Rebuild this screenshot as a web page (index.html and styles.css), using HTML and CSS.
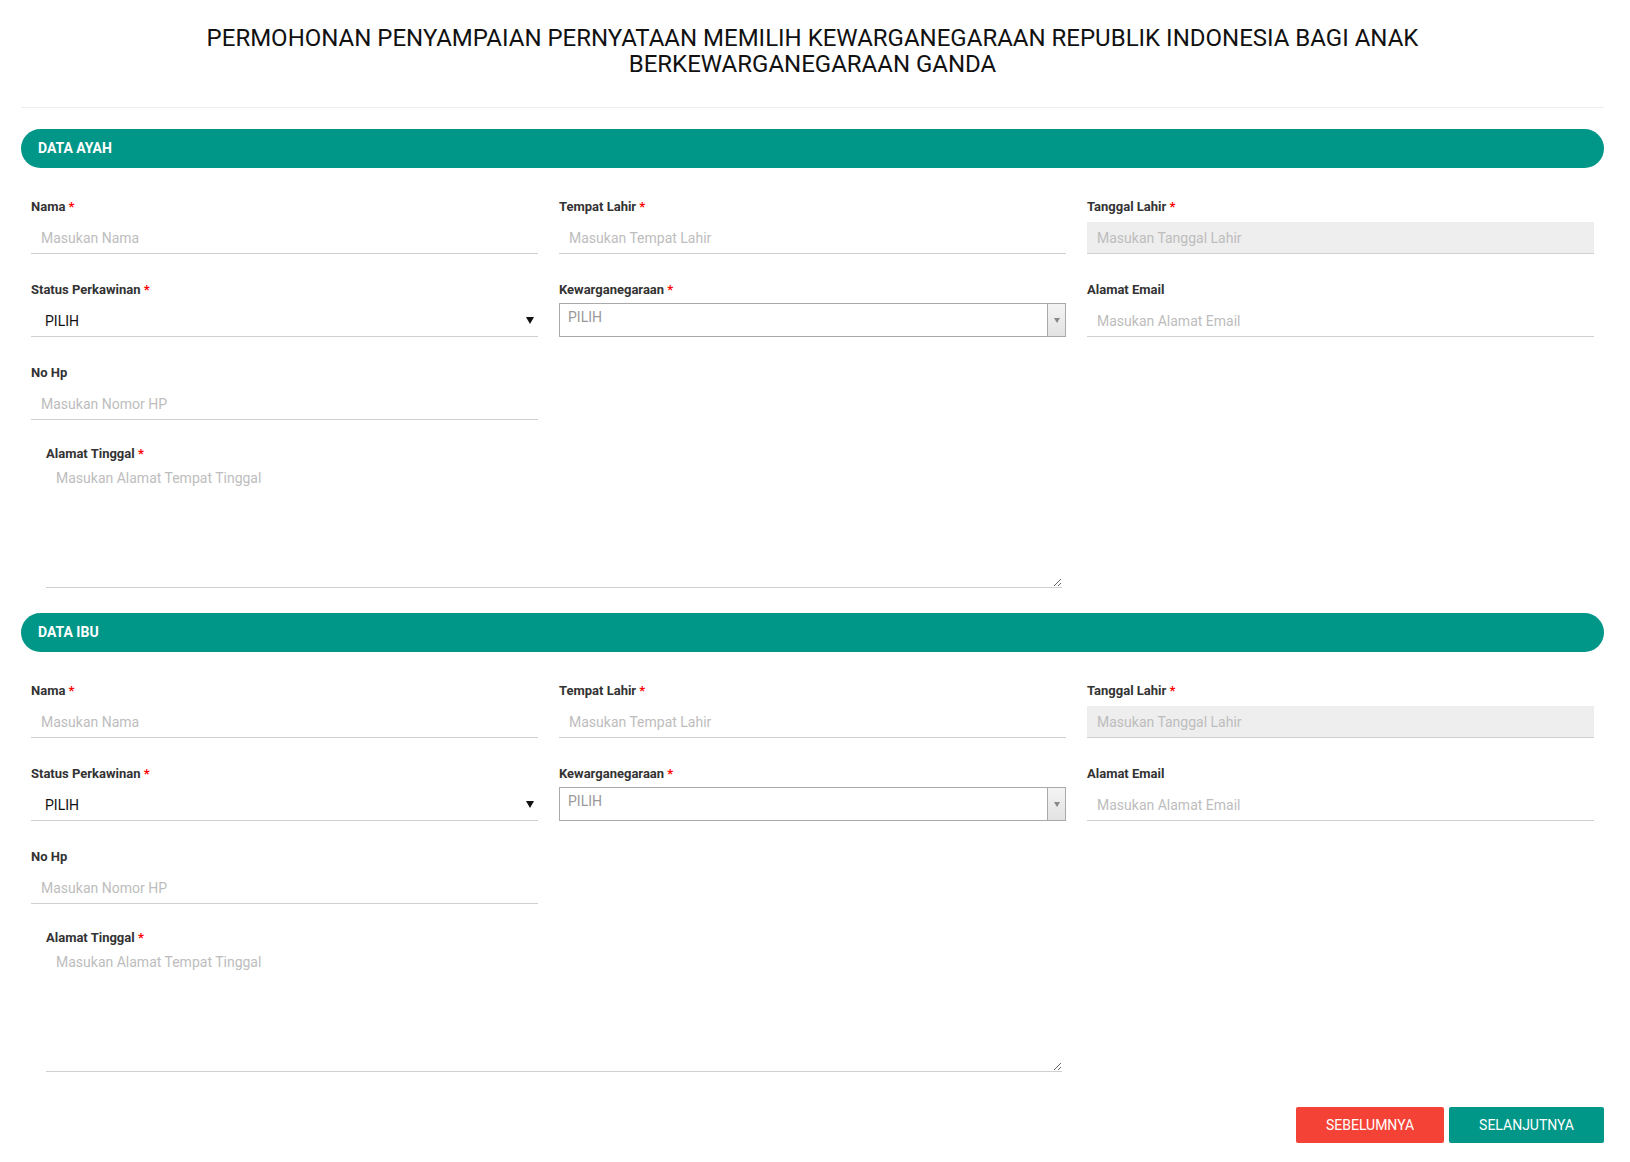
FILE: index.html
```html
<!DOCTYPE html>
<html lang="id">
<head>
<meta charset="utf-8">
<title>Permohonan</title>
<link rel="stylesheet" href="styles.css">
</head>
<body>
<div class="page">
  <h1 class="title">PERMOHONAN PENYAMPAIAN PERNYATAAN MEMILIH KEWARGANEGARAAN REPUBLIK INDONESIA BAGI ANAK<br>BERKEWARGANEGARAAN GANDA</h1>
  <hr class="divider">

  <section class="section">
    <div class="bar">DATA AYAH</div>
    <div class="fields">
      <div class="field">
        <label>Nama <span class="req">*</span></label>
        <input class="input" type="text" placeholder="Masukan Nama">
      </div>
      <div class="field">
        <label>Tempat Lahir <span class="req">*</span></label>
        <input class="input" type="text" placeholder="Masukan Tempat Lahir">
      </div>
      <div class="field">
        <label>Tanggal Lahir <span class="req">*</span></label>
        <input class="input input-disabled" type="text" placeholder="Masukan Tanggal Lahir">
      </div>
      <div class="field">
        <label>Status Perkawinan <span class="req">*</span></label>
        <div class="native-select"><span>PILIH</span><span class="native-arrow"></span></div>
      </div>
      <div class="field">
        <label>Kewarganegaraan <span class="req">*</span></label>
        <div class="s2"><span class="s2-text">PILIH</span><span class="s2-arrow"><b></b></span></div>
      </div>
      <div class="field">
        <label>Alamat Email</label>
        <input class="input" type="text" placeholder="Masukan Alamat Email">
      </div>
      <div class="field">
        <label>No Hp</label>
        <input class="input" type="text" placeholder="Masukan Nomor HP">
      </div>
    </div>
    <div class="address">
      <label>Alamat Tinggal <span class="req">*</span></label>
      <textarea class="textarea" placeholder="Masukan Alamat Tempat Tinggal"></textarea>
    </div>
  </section>

  <section class="section">
    <div class="bar">DATA IBU</div>
    <div class="fields">
      <div class="field">
        <label>Nama <span class="req">*</span></label>
        <input class="input" type="text" placeholder="Masukan Nama">
      </div>
      <div class="field">
        <label>Tempat Lahir <span class="req">*</span></label>
        <input class="input" type="text" placeholder="Masukan Tempat Lahir">
      </div>
      <div class="field">
        <label>Tanggal Lahir <span class="req">*</span></label>
        <input class="input input-disabled" type="text" placeholder="Masukan Tanggal Lahir">
      </div>
      <div class="field">
        <label>Status Perkawinan <span class="req">*</span></label>
        <div class="native-select"><span>PILIH</span><span class="native-arrow"></span></div>
      </div>
      <div class="field">
        <label>Kewarganegaraan <span class="req">*</span></label>
        <div class="s2"><span class="s2-text">PILIH</span><span class="s2-arrow"><b></b></span></div>
      </div>
      <div class="field">
        <label>Alamat Email</label>
        <input class="input" type="text" placeholder="Masukan Alamat Email">
      </div>
      <div class="field">
        <label>No Hp</label>
        <input class="input" type="text" placeholder="Masukan Nomor HP">
      </div>
    </div>
    <div class="address">
      <label>Alamat Tinggal <span class="req">*</span></label>
      <textarea class="textarea" placeholder="Masukan Alamat Tempat Tinggal"></textarea>
    </div>
  </section>

  <div class="actions">
    <button class="btn btn-red" type="button">SEBELUMNYA</button>
    <button class="btn btn-teal" type="button">SELANJUTNYA</button>
  </div>
</div>
</body>
</html>
```

FILE: styles.css
```css
html, body {
  margin: 0;
  background: #fff;
}
body {
  font-family: Roboto, "Liberation Sans", sans-serif;
  color: #212121;
}
.page {
  padding: 0 26px 0 21px;
}
.title {
  margin: 0;
  padding-top: 25px;
  text-align: center;
  font-size: 24px;
  font-weight: 400;
  line-height: 26px;
  color: #111;
}
.divider {
  border: 0;
  border-top: 1px solid #eee;
  margin: 30px 0 21px;
}
.bar {
  background: #009688;
  color: #fff;
  height: 39px;
  border-radius: 20px;
  padding: 0 17px;
  font-size: 14px;
  font-weight: 700;
  line-height: 39px;
}
.fields {
  display: grid;
  grid-template-columns: repeat(3, 1fr);
  column-gap: 21px;
  row-gap: 28px;
  padding: 31px 10px 0;
}
.field label,
.address label {
  display: block;
  font-size: 13px;
  font-weight: 700;
  line-height: 16px;
  color: #333;
  margin-bottom: 7px;
}
.req {
  color: #f00;
}
.input {
  display: block;
  width: 100%;
  box-sizing: border-box;
  height: 32px;
  margin: 0;
  border: 0;
  border-bottom: 1px solid #d0d0d0;
  padding: 0 10px;
  font-family: Roboto, "Liberation Sans", sans-serif;
  font-size: 14px;
  color: #212121;
  background: transparent;
  outline: none;
}
.input::placeholder,
.textarea::placeholder {
  color: #bdbdbd;
}
.input-disabled {
  background: #eee;
}
.native-select {
  display: flex;
  align-items: center;
  justify-content: space-between;
  height: 32px;
  box-sizing: border-box;
  border-bottom: 1px solid #d0d0d0;
  padding: 0 4px 0 14px;
  font-size: 14px;
  color: #111;
}
.native-arrow {
  width: 0;
  height: 0;
  border-left: 4px solid transparent;
  border-right: 4px solid transparent;
  border-top: 7px solid #111;
}
.s2 {
  display: flex;
  height: 34px;
  box-sizing: border-box;
  border: 1px solid #aaa;
  background: #fff;
  margin-top: -2px;
}
.s2-text {
  flex: 1;
  padding-left: 8px;
  line-height: 26px;
  font-size: 14px;
  color: #999;
}
.s2-arrow {
  width: 17px;
  border-left: 1px solid #aaa;
  background: linear-gradient(to bottom, #f4f4f4 0%, #e2e2e2 100%);
  display: flex;
  align-items: center;
  justify-content: center;
}
.s2-arrow b {
  width: 0;
  height: 0;
  border-left: 3px solid transparent;
  border-right: 3px solid transparent;
  border-top: 5px solid #888;
}
.address {
  margin: 26px 0 0 25px;
  width: 1016px;
}
.address label {
  margin-bottom: 4px;
}
.textarea {
  display: block;
  width: 100%;
  box-sizing: border-box;
  height: 122px;
  margin: 0;
  border: 0;
  border-bottom: 1px solid #d0d0d0;
  padding: 2px 10px 0;
  font-family: Roboto, "Liberation Sans", sans-serif;
  font-size: 14px;
  line-height: 20px;
  background: transparent;
  outline: none;
}
.section + .section {
  margin-top: 25px;
}
.actions {
  display: flex;
  justify-content: flex-end;
  gap: 5px;
  margin-top: 35px;
}
.btn {
  height: 36px;
  border: 0;
  border-radius: 2px;
  padding: 0 30px;
  font-family: Roboto, "Liberation Sans", sans-serif;
  font-size: 14px;
  color: #fff;
  cursor: pointer;
}
.btn-red {
  background: #f44336;
}
.btn-teal {
  background: #009688;
}
```
